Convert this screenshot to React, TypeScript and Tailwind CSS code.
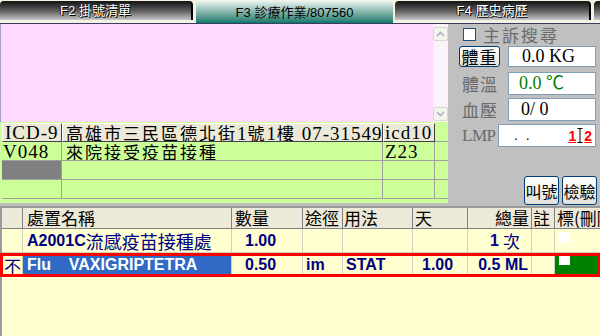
import React from "react";

const CJK = "font-['Noto_Sans_CJK_TC',sans-serif]";
const SERIF = "font-['Liberation_Serif','Noto_Sans_CJK_TC',serif]";

const TabBar = () => (
  <div className="h-[24px] shrink-0 flex items-end bg-[#f4f2e2] border-b border-[#3c3c64]">
    <div className="w-[193px] h-[19px] mb-[3px] rounded-t-[4px] border-r-2 border-black bg-linear-to-b from-[#141414] via-[#5c5c5c] to-[#c8c8c8] flex items-center justify-center text-[13px] leading-none text-white [text-shadow:1px_1px_0_#000,-1px_0_0_#222]">
      F2 掛號清單
    </div>
    <div className="w-[197px] h-[22px] ml-[3px] rounded-t-[4px] bg-linear-to-b from-[#e8f4f1] to-[#00786a] flex items-center justify-center text-[13px] leading-none text-black">
      F3 診療作業/807560
    </div>
    <div className="w-[196px] h-[19px] mb-[3px] ml-[2px] rounded-t-[4px] border-r-2 border-black bg-linear-to-b from-[#141414] via-[#5c5c5c] to-[#c8c8c8] flex items-center justify-center text-[13px] leading-none text-white [text-shadow:1px_1px_0_#000,-1px_0_0_#222]">
      F4 歷史病歷
    </div>
    <div className="w-[6px] h-[19px] mb-[3px] ml-[3px] rounded-tl-[4px] bg-linear-to-b from-[#141414] via-[#5c5c5c] to-[#c8c8c8]" />
  </div>
);

const ScrollBtn = ({ up }: { up?: boolean }) => (
  <div className="w-[15px] h-[14px] rounded-[2px] border border-[#d6d6cc] bg-[#f5f5f0] flex items-center justify-center">
    <svg width="9" height="6" viewBox="0 0 9 6">
      <path d={up ? "M1 5 L4.5 1.5 L8 5" : "M1 1 L4.5 4.5 L8 1"} fill="none" stroke="#aab0c4" strokeWidth="1.6" />
    </svg>
  </div>
);

const Memo = () => (
  <div className="h-[98px] flex justify-end bg-[#ffd9ff] border-l border-[#a8a0c0]">
    <div className="w-[15px] flex flex-col justify-between pt-[3px] pb-[1px] bg-[#fcf2fc]">
      <ScrollBtn up />
      <ScrollBtn />
    </div>
  </div>
);

// chinese segment inside the serif table text
const C = ({ children }: { children: React.ReactNode }) => (
  <span className={`text-[17px] tracking-[2px] ${CJK}`}>{children}</span>
);

const headCell = "h-[19px] flex items-center bg-[#ece9d8] border border-white border-r-[#404040] border-b-[#404040] overflow-hidden whitespace-pre";
const dataCell = "h-[19px] flex items-center border-r border-b border-[#a0a0a0] overflow-hidden whitespace-pre";

const IcdTable = () => (
  <div className={`h-[81px] bg-[#ccff99] pt-[1px] pl-[2px] text-[19px] tracking-[1px] leading-[15px] text-black ${SERIF}`}>
    <div className="grid grid-cols-[60px_321px_52px_13px]">
      <div className={`${headCell} pl-[2px]`}>ICD-9</div>
      <div className={`${headCell} pl-[3px]`}>
        <span>
          <C>高雄市三民區德北街</C>1<C>號</C>1<C>樓</C> 07-31549
        </span>
      </div>
      <div className={`${headCell} pl-[1px]`}>icd10</div>
      <div className="h-[19px] border-b border-[#a0a0a0]" />

      <div className={`${dataCell} pl-[1px]`}>V048</div>
      <div className={`${dataCell} pl-[4px]`}>
        <C>來院接受疫苗接種</C>
      </div>
      <div className={`${dataCell} pl-[2px]`}>Z23</div>
      <div className="h-[19px] border-b border-[#a0a0a0]" />

      <div className={`${dataCell} bg-[#808080]`} />
      <div className={dataCell} />
      <div className={dataCell} />
      <div className="h-[19px] border-b border-[#a0a0a0]" />

      <div className={dataCell} />
      <div className={dataCell} />
      <div className={dataCell} />
      <div className="h-[19px] border-b border-[#a0a0a0]" />
    </div>
  </div>
);

const Field = ({ className, children }: { className?: string; children?: React.ReactNode }) => (
  <div className={`h-full bg-white border border-[#7f9db9] flex items-center whitespace-pre ${className ?? ""}`}>{children}</div>
);

const XpButton = ({ className, children }: { className?: string; children: React.ReactNode }) => (
  <div className={`flex items-center justify-center whitespace-nowrap rounded-[3px] border border-[#003c74] bg-linear-to-b from-white to-[#e2e2da] text-black leading-none ${CJK} ${className ?? ""}`}>
    {children}
  </div>
);

const VitalsPanel = () => (
  <div className="w-[152px] flex flex-col bg-[#c0c0c0] pt-[3px] text-[#6a6a6a]">
    <div className="h-[15px] flex items-center pl-[15px]">
      <span className="w-[13px] h-[13px] border border-[#1c5180] bg-white" />
      <span className={`ml-[7px] text-[17px] tracking-[2px] leading-none ${CJK}`}>主訴搜尋</span>
    </div>

    <div className="mt-[4px] h-[21px] flex pl-[11px]">
      <XpButton className="w-[41px] h-[21px] text-[17px] tracking-[1px]">體重</XpButton>
      <Field className={`ml-[8px] w-[88px] pl-[13px] text-[18px] text-black ${SERIF}`}>0.0 KG</Field>
    </div>

    <div className="mt-[5px] h-[23px] flex items-center pl-[14px]">
      <span className={`w-[46px] text-[17px] tracking-[1px] leading-none ${CJK}`}>體溫</span>
      <Field className={`w-[88px] pl-[10px] text-[18px] text-[#008000] ${SERIF}`}>0.0 ℃</Field>
    </div>

    <div className="mt-[3px] h-[23px] flex items-center pl-[14px]">
      <span className={`w-[46px] text-[17px] tracking-[1px] leading-none ${CJK}`}>血壓</span>
      <Field className={`w-[88px] pl-[12px] text-[18px] text-black ${SERIF}`}>0/ 0</Field>
    </div>

    <div className="mt-[3px] h-[23px] flex items-center pl-[14px]">
      <span className={`w-[36px] text-[17px] tracking-[-0.5px] leading-none ${SERIF}`}>LMP</span>
      <Field className="w-[98px] pl-[15px] pr-[3px] justify-between">
        <span className="text-[14px] text-black">.  .</span>
        <span className="flex items-center text-[14px] font-bold text-[#ff0000] leading-none">
          <span className="underline">1</span>
          <svg width="6" height="15" viewBox="0 0 6 15" className="mx-[1px]">
            <path d="M0.5 0.5 H5.5 M3 0.5 V14.5 M0.5 14.5 H5.5" stroke="#000" strokeWidth="1" fill="none" />
          </svg>
          <span className="underline">2</span>
        </span>
      </Field>
    </div>

    <div className="mt-auto flex justify-end gap-[3px] pr-[3px] pb-[1px]">
      <XpButton className="w-[35px] h-[29px] text-[16px]">叫號</XpButton>
      <XpButton className="w-[35px] h-[29px] text-[16px]">檢驗</XpButton>
    </div>
  </div>
);

const gh = `h-[21px] bg-[#ece9d8] border-r border-b border-[#808080] text-[17px] font-normal leading-[20px] text-black overflow-hidden whitespace-nowrap ${CJK}`;
const gc = "h-[24px] border-r border-b border-[#cfcfbc] flex items-center overflow-hidden whitespace-nowrap";
const rc = "h-[18px] border-r border-[#cfcfbc] flex items-center overflow-hidden whitespace-nowrap";

const OrderGrid = () => (
  <div className="flex-1 bg-[#ffffd2] border-l-2 border-t-2 border-[#9a9a9a] text-[16px] font-bold text-[#000080] leading-none">
    <div className="grid grid-cols-[21px_209px_71px_40px_70px_55px_64px_23px_45px]">
      <div className={gh} />
      <div className={`${gh} pl-[4px]`}>處置名稱</div>
      <div className={`${gh} pl-[3px]`}>數量</div>
      <div className={`${gh} pl-[2px]`}>途徑</div>
      <div className={`${gh} pl-[1px]`}>用法</div>
      <div className={`${gh} pl-[2px]`}>天</div>
      <div className={`${gh} text-right pr-[2px]`}>總量</div>
      <div className={`${gh} pl-[1px]`}>註</div>
      <div className={`${gh} pl-[2px] border-r-0`}>標(刪除)</div>

      <div className={gc} />
      <div className={`${gc} pl-[4px]`}>
        A2001C<span className={`font-normal text-[18px] ${CJK}`}>流感疫苗接種處</span>
      </div>
      <div className={`${gc} pl-[13px]`}>1.00</div>
      <div className={gc} />
      <div className={gc} />
      <div className={gc} />
      <div className={`${gc} justify-end pr-[11px]`}>
        1 <span className={`ml-[4px] font-normal text-[17px] ${CJK}`}>次</span>
      </div>
      <div className={gc} />
      <div className={`${gc} items-start pl-[4px] border-r-0`}>
        <span className="mt-[3px] w-[11px] h-[11px] bg-white" />
      </div>
    </div>

    <div className="-ml-[2px] w-[600px] h-[24px] border-[3px] border-[#ff0000] grid grid-cols-[20px_209px_71px_40px_70px_55px_64px_23px_42px]">
      <div className={`${rc} justify-center font-normal text-[17px] ${CJK}`}>不</div>
      <div className={`${rc} pl-[4px] bg-[#316ac5] text-white whitespace-pre`}>Flu    VAXIGRIPTETRA</div>
      <div className={`${rc} pl-[13px]`}>0.50</div>
      <div className={`${rc} pl-[3px]`}>im</div>
      <div className={`${rc} pl-[3px]`}>STAT</div>
      <div className={`${rc} pl-[9px]`}>1.00</div>
      <div className={`${rc} justify-end pr-[3px]`}>0.5 ML</div>
      <div className={rc} />
      <div className={`${rc} items-start pl-[4px] bg-[#008000] border-r-0`}>
        <span className="w-[11px] h-[9px] bg-white" />
      </div>
    </div>
  </div>
);

export default function App() {
  return (
    <div className="w-[600px] h-[336px] overflow-hidden flex flex-col bg-[#c0c0c0] font-['Liberation_Sans','Noto_Sans_CJK_TC',sans-serif]">
      <TabBar />
      <div className="flex h-[182px] shrink-0">
        <div className="w-[448px] flex flex-col">
          <Memo />
          <IcdTable />
        </div>
        <VitalsPanel />
      </div>
      <OrderGrid />
    </div>
  );
}
